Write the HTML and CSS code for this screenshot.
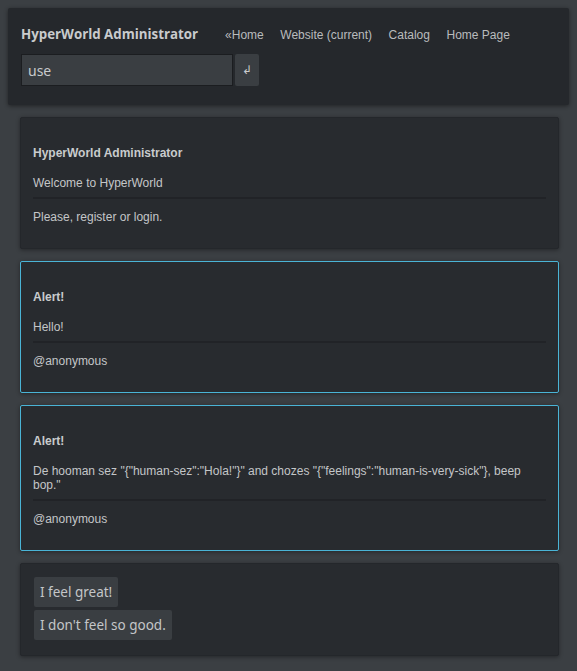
FILE: index.html
```html
<!DOCTYPE html>
<html>
<head>
<meta charset="utf-8">
<link rel="stylesheet" href="styles.css">
</head>
<body>
<header class="topbar">
  <div class="topbar-row">
    <span class="brand">HyperWorld Administrator</span>
    <nav class="nav">
      <a class="nav-link">«Home</a>
      <a class="nav-link">Website (current)</a>
      <a class="nav-link">Catalog</a>
      <a class="nav-link">Home Page</a>
    </nav>
  </div>
  <form class="search">
    <input class="search-input" type="text" value="use">
    <button class="search-btn" type="button">↲</button>
  </form>
</header>

<section class="card">
  <h4 class="card-title">HyperWorld Administrator</h4>
  <p class="card-body">Welcome to HyperWorld</p>
  <p class="card-foot">Please, register or login.</p>
</section>

<section class="card card-alert">
  <h4 class="card-title">Alert!</h4>
  <p class="card-body">Hello!</p>
  <p class="card-foot">@anonymous</p>
</section>

<section class="card card-alert">
  <h4 class="card-title">Alert!</h4>
  <p class="card-body">De hooman sez "{"human-sez":"Hola!"}" and chozes "{"feelings":"human-is-very-sick"}, beep bop."</p>
  <p class="card-foot">@anonymous</p>
</section>

<section class="card card-actions">
  <button class="action" type="button">I feel great!</button>
  <button class="action" type="button">I don't feel so good.</button>
</section>
</body>
</html>
```

FILE: styles.css
```css
html, body {
  margin: 0;
  padding: 0;
}
body {
  background: #3b3f43;
  padding: 8px 8px 12px;
  font-family: "Liberation Sans", Arial, sans-serif;
  font-size: 12px;
  color: #c4c6c8;
}
.topbar {
  background: #25282c;
  padding: 17px 12px 19px 13px;
  box-shadow: 0 1px 4px rgba(0, 0, 0, 0.45);
  border-radius: 2px;
}
.topbar-row {
  display: flex;
  align-items: baseline;
  height: 24px;
}
.brand {
  font-family: "Open Sans", "Noto Sans", sans-serif;
  font-weight: 700;
  font-size: 13.3px;
  color: #c9cbcd;
  margin-right: 27px;
}
.nav {
  display: flex;
  gap: 16.5px;
}
.nav-link {
  color: #b9bbbd;
  font-size: 12px;
}
.search {
  display: flex;
  gap: 2px;
  margin-top: 5px;
}
.search-input {
  width: 212px;
  height: 32px;
  box-sizing: border-box;
  background: #3a3e42;
  border: 1px solid #1b1d20;
  color: #c8cacc;
  font-family: "Noto Sans", "Open Sans", sans-serif;
  font-size: 14px;
  padding: 0 6px;
  margin: 0;
  outline: none;
}
.search-btn {
  width: 24px;
  height: 32px;
  background: #3a3e42;
  border: none;
  border-radius: 2px;
  color: #c8cacc;
  font-size: 12px;
  padding: 0;
  margin: 0;
}
.card {
  background: #282b2f;
  margin: 12px 10px 0 12px;
  padding: 12px;
  border: 1px solid #24272b;
  border-radius: 2px;
  box-shadow: 0 1px 4px rgba(0, 0, 0, 0.4);
}
.card-alert {
  border-color: #4ab4d6;
}
.card-title {
  margin: 16px 0 0;
  font-size: 12px;
  line-height: 14px;
  font-weight: 700;
  color: #c9cbcd;
}
.card-body {
  margin: 16px 0 0;
  line-height: 14px;
  padding-bottom: 7px;
  border-bottom: 2px solid #212327;
}
.card-foot {
  margin: 11px 0 12px;
  line-height: 14px;
}
.card-actions {
  display: flex;
  flex-direction: column;
  align-items: flex-start;
  gap: 3px;
  padding: 13px 12px 15px 13px;
}
.action {
  background: #3a3e42;
  border: none;
  border-radius: 2px;
  color: #c4c6c8;
  font-family: "Noto Sans", "Open Sans", sans-serif;
  font-size: 13.5px;
  height: 30px;
  padding: 0 6px;
  margin: 0;
}
```
